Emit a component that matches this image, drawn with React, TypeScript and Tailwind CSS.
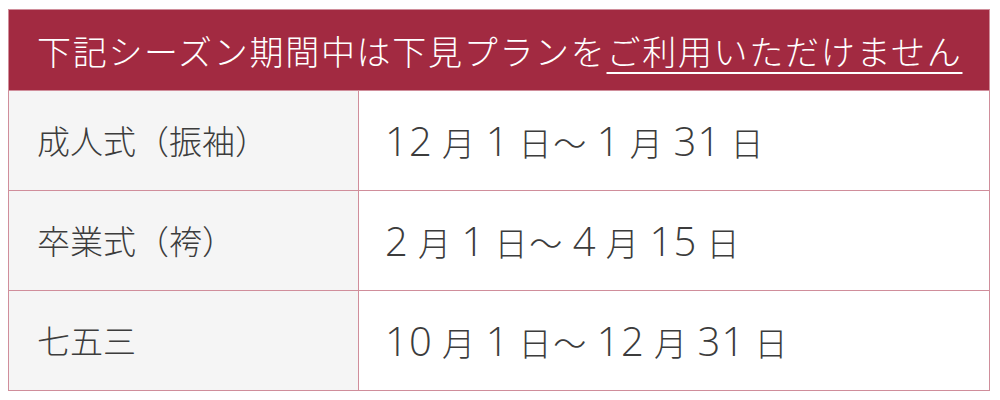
import React from "react";

const rows = [
  { label: "成人式（振袖）", period: "12 月 1 日〜 1 月 31 日" },
  { label: "卒業式（袴）", period: "2 月 1 日〜 4 月 15 日" },
  { label: "七五三", period: "10 月 1 日〜 12 月 31 日" },
];

function Period({ text }: { text: string }) {
  const parts = text.split(/(\d+)/).filter((p) => p.length > 0);
  return (
    <span className="leading-none">
      {parts.map((p, i) =>
        /^\d+$/.test(p) ? (
          <span
            key={i}
            className="text-[40px] leading-none font-light tracking-[0.03em] font-['Open_Sans',sans-serif]"
          >
            {p}
          </span>
        ) : (
          <span key={i} className="text-[33px] leading-none font-light tracking-[0.05em]">
            {p}
          </span>
        )
      )}
    </span>
  );
}

export default function App() {
  return (
    <div
      className="w-[1000px] h-[400px] bg-white pt-[9px] pl-[8px]"
      style={{ fontFamily: '"Noto Sans CJK JP", "Noto Sans", sans-serif' }}
    >
      <div className="w-[982px] border border-[#d08e9b]">
        <div className="h-[80px] bg-[#a22a41] flex items-center pl-[28px] text-white text-[34px] font-light tracking-[0.05em] whitespace-nowrap">
          下記シーズン期間中は下見プランを
          <span className="underline decoration-[1.5px] underline-offset-[7px]">ご利用いただけません</span>
        </div>
        {rows.map((r, i) => (
          <div
            key={i}
            className="flex h-[100px] border-t border-[#d08e9b] text-[#3c3c3c] text-[33px] font-light"
          >
            <div className="w-[350px] bg-[#f5f5f5] border-r border-[#d08e9b] flex items-center pl-[28px] whitespace-nowrap">
              {r.label}
            </div>
            <div className="flex-1 bg-white flex items-center pl-[26px] whitespace-nowrap">
              <Period text={r.period} />
            </div>
          </div>
        ))}
      </div>
    </div>
  );
}
